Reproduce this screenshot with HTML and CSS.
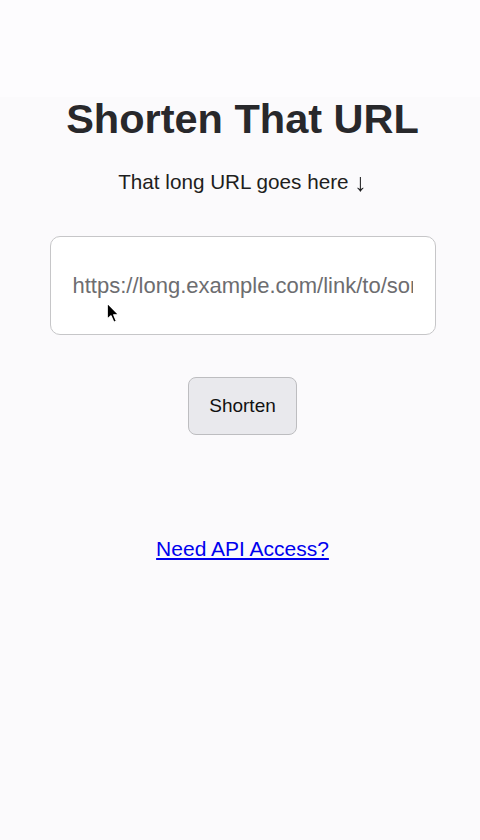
FILE: index.html
```html
<!DOCTYPE html>
<html lang="en">
<head>
<meta charset="utf-8">
<title>Shorten That URL</title>
<link rel="stylesheet" href="styles.css">
</head>
<body>
<main class="page">
  <h1 class="title">Shorten That URL</h1>
  <p class="subtitle">That long URL goes here <span class="arrow">↓</span></p>
  <form class="form">
    <div class="field">
      <input class="url-input" type="text" placeholder="https://long.example.com/link/to/something/very/long">
      <svg class="cursor" width="15" height="22" viewBox="0 0 14 21" aria-hidden="true">
        <path d="M1 1 L1 16.5 L4.6 13.2 L7.3 19.4 L9.8 18.3 L7.2 12.2 L12 12.2 Z" fill="#000" stroke="#fff" stroke-width="1.2" stroke-linejoin="round"/>
      </svg>
    </div>
    <button class="btn" type="button">Shorten</button>
  </form>
  <a class="api-link" href="#">Need API Access?</a>
</main>
</body>
</html>
```

FILE: styles.css
```css
html, body {
  margin: 0;
  padding: 0;
}

body {
  background: linear-gradient(#fdfcfe 0, #fdfcfe 97px, #fbfafc 97px);
  min-height: 840px;
  font-family: "Liberation Sans", Arial, Helvetica, sans-serif;
}

.page {
  display: flex;
  flex-direction: column;
  align-items: center;
  padding-top: 95px;
  padding-left: 5px;
}

.title {
  margin: 0;
  font-size: 41.5px;
  line-height: 48px;
  font-weight: 700;
  color: #28282b;
}

.subtitle {
  margin: 25px 0 0;
  font-size: 20.7px;
  line-height: 24px;
  height: 26px;
  color: #1e1e20;
}

.arrow {
  display: inline-block;
  font-size: 25px;
  line-height: 1;
  will-change: transform;
  transform: translateY(2px) translateZ(0);
  color: #1e1e20;
}

.form {
  display: flex;
  flex-direction: column;
  align-items: center;
  margin-top: 42px;
}

.field {
  position: relative;
}

.url-input {
  box-sizing: border-box;
  width: 386px;
  height: 99px;
  padding: 0 22px;
  border: 1px solid #c6c6c8;
  border-radius: 10px;
  background: #ffffff;
  font-family: "Liberation Sans", Arial, Helvetica, sans-serif;
  font-size: 22px;
  color: #222;
  outline: none;
}

.url-input::placeholder {
  color: #6d6d70;
  opacity: 1;
}

.cursor {
  position: absolute;
  left: 56px;
  top: 66px;
}

.btn {
  box-sizing: border-box;
  margin-top: 42px;
  width: 109px;
  height: 58px;
  border: 1px solid #bdbdc0;
  border-radius: 8px;
  background: #e9e9ed;
  font-family: "Liberation Sans", Arial, Helvetica, sans-serif;
  font-size: 19px;
  color: #111;
  padding: 0;
}

.api-link {
  margin-top: 102px;
  font-size: 21px;
  line-height: 24px;
  color: #0000ee;
  text-decoration: underline;
}
```
